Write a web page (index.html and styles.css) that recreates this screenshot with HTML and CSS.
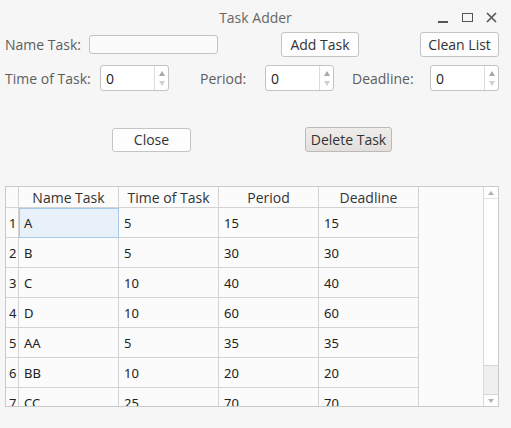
FILE: index.html
```html
<!DOCTYPE html>
<html>
<head>
<meta charset="utf-8">
<link rel="stylesheet" href="styles.css">
</head>
<body>
<div class="window">
  <div class="titlebar">
    <div class="title">Task Adder</div>
    <div class="controls">
      <span class="ctl min"></span>
      <span class="ctl max"></span>
      <svg class="ctl close" width="11" height="11" viewBox="0 0 11 11"><path d="M1 1L10 10M10 1L1 10" stroke="#555" stroke-width="1.6" fill="none"/></svg>
    </div>
  </div>

  <div class="row row1">
    <label class="lbl lbl-name">Name Task:</label>
    <input class="text-input" type="text">
    <button class="btn btn-add">Add Task</button>
    <button class="btn btn-clean">Clean List</button>
  </div>

  <div class="row row2">
    <label class="lbl lbl-time">Time of Task:</label>
    <div class="spin"><span class="val">0</span><span class="arrows"><span class="up"></span><span class="down"></span></span></div>
    <label class="lbl lbl-period">Period:</label>
    <div class="spin"><span class="val">0</span><span class="arrows"><span class="up"></span><span class="down"></span></span></div>
    <label class="lbl lbl-deadline">Deadline:</label>
    <div class="spin"><span class="val">0</span><span class="arrows"><span class="up"></span><span class="down"></span></span></div>
  </div>

  <div class="row row3">
    <button class="btn btn-close">Close</button>
    <button class="btn btn-delete">Delete Task</button>
  </div>

  <div class="grid">
    <div class="grid-body">
      <table class="tbl">
        <thead>
          <tr><th class="rn"></th><th>Name Task</th><th>Time of Task</th><th>Period</th><th>Deadline</th></tr>
        </thead>
        <tbody>
          <tr><td class="rn">1</td><td class="sel">A</td><td>5</td><td>15</td><td>15</td></tr>
          <tr><td class="rn">2</td><td>B</td><td>5</td><td>30</td><td>30</td></tr>
          <tr><td class="rn">3</td><td>C</td><td>10</td><td>40</td><td>40</td></tr>
          <tr><td class="rn">4</td><td>D</td><td>10</td><td>60</td><td>60</td></tr>
          <tr><td class="rn">5</td><td>AA</td><td>5</td><td>35</td><td>35</td></tr>
          <tr><td class="rn">6</td><td>BB</td><td>10</td><td>20</td><td>20</td></tr>
          <tr><td class="rn">7</td><td>CC</td><td>25</td><td>70</td><td>70</td></tr>
        </tbody>
      </table>
    </div>
    <div class="scrollbar">
      <span class="sb-up"></span>
      <div class="sb-track"><div class="sb-thumb"></div></div>
      <span class="sb-down"></span>
    </div>
  </div>
</div>
</body>
</html>
```

FILE: styles.css
```css
html, body {
  margin: 0;
  padding: 0;
  background: #f6f6f6;
}
body {
  width: 511px;
  height: 428px;
  overflow: hidden;
  font-family: "Open Sans", "Noto Sans", sans-serif;
  font-size: 14px;
  color: #333;
}
.window {
  display: flex;
  flex-direction: column;
}
.titlebar {
  height: 32px;
  display: flex;
  align-items: center;
  justify-content: center;
  position: relative;
}
.title {
  font-size: 14px;
  color: #666;
  margin-top: 2px;
}
.controls {
  position: absolute;
  right: 14px;
  top: 12px;
  display: flex;
  align-items: center;
  gap: 14px;
}
.ctl { display: block; }
.min {
  width: 10px;
  height: 2px;
  background: #555;
  margin-top: 8px;
}
.max {
  box-sizing: border-box;
  border: 1.5px solid #555;
  width: 11px;
  height: 9px;
  margin-right: -1px;
}
.row {
  display: flex;
  align-items: center;
  padding-left: 5px;
}
.lbl {
  color: #5d5d5d;
  font-size: 14px;
  flex: none;
}
.lbl-name { width: 84px; }
.lbl-time { width: 95px; }
.lbl-period { margin-left: 31px; width: 65px; }
.lbl-deadline { margin-left: 18px; width: 78px; }
.row1 {
  height: 25px;
}
.text-input {
  width: 129px;
  height: 19px;
  box-sizing: border-box;
  border: 1px solid #c3c3c3;
  border-radius: 3px;
  background: #fbfbfb;
  padding: 0;
}
.btn {
  font-family: "Open Sans", "Noto Sans", sans-serif;
  font-size: 14px;
  color: #333;
  height: 25px;
  box-sizing: border-box;
  border: 1px solid #c4c4c4;
  border-radius: 3px;
  background: #fdfdfd;
  padding: 0;
}
.btn-add { margin-left: 63px; width: 78px; }
.btn-clean { margin-left: 61px; width: 79px; }
.row2 {
  margin-top: 8px;
  height: 26px;
}
.spin {
  width: 69px;
  height: 26px;
  box-sizing: border-box;
  border: 1px solid #c3c3c3;
  border-radius: 3px;
  background: #fff;
  display: flex;
  align-items: stretch;
  flex: none;
}
.val {
  flex: 1;
  display: flex;
  align-items: center;
  padding-left: 5px;
  color: #222;
  font-size: 14px;
}
.arrows {
  width: 13px;
  border-left: 1px solid #dcdcdc;
  display: flex;
  flex-direction: column;
  align-items: center;
  justify-content: center;
  gap: 5px;
}
.up {
  width: 0; height: 0;
  border-left: 3.5px solid transparent;
  border-right: 3.5px solid transparent;
  border-bottom: 5px solid #a8a8a8;
}
.down {
  width: 0; height: 0;
  border-left: 3.5px solid transparent;
  border-right: 3.5px solid transparent;
  border-top: 5px solid #d0d0d0;
}
.row3 {
  margin-top: 36px;
  height: 25px;
  padding-left: 112px;
}
.btn-close { width: 79px; height: 24px; }
.btn-delete {
  margin-left: 114px;
  width: 87px;
  background: linear-gradient(#efedea, #e2e0dc);
  border-color: #bcbab6;
}
.grid {
  margin: 34px 0 0 5px;
  width: 494px;
  height: 221px;
  box-sizing: border-box;
  border: 1px solid #c9c9c9;
  background: #fbfbfb;
  display: flex;
}
.grid-body {
  flex: 1;
  overflow: hidden;
}
.tbl {
  border-collapse: collapse;
  table-layout: fixed;
  font-family: "Noto Sans", "DejaVu Sans", sans-serif;
  font-size: 13px;
  color: #222;
}
.tbl th {
  font-family: "Open Sans", "Noto Sans", sans-serif;
  font-weight: normal;
  font-size: 14px;
  color: #333;
  height: 20px;
  padding: 0;
  border-right: 1px solid #d3d3d3;
  border-bottom: 1px solid #d3d3d3;
  width: 99px;
  text-align: center;
  line-height: 19px;
}
.tbl td {
  height: 30px;
  padding: 0 0 0 5px;
  border-right: 1px solid #d3d3d3;
  border-bottom: 1px solid #d3d3d3;
  width: 94px;
  box-sizing: border-box;
  white-space: nowrap;
}
.tbl th.rn { width: 12px; }
.tbl td.rn {
  width: 12px;
  padding: 0 0 0 3px;
  font-size: 13px;
}
.tbl td.sel {
  background: #e8f0f9;
  outline: 1px solid #a9c9e9;
  outline-offset: -1px;
}
.scrollbar {
  width: 14px;
  border-left: 1px solid #dadada;
  background: #fefefe;
  display: flex;
  flex-direction: column;
  align-items: stretch;
}
.sb-up, .sb-down {
  height: 11px;
  display: flex;
  justify-content: center;
  align-items: center;
}
.sb-up::before {
  content: "";
  border-left: 3.5px solid transparent;
  border-right: 3.5px solid transparent;
  border-bottom: 4px solid #b0b0b0;
}
.sb-down::before {
  content: "";
  border-left: 3.5px solid transparent;
  border-right: 3.5px solid transparent;
  border-top: 4px solid #b0b0b0;
}
.sb-up { border-bottom: 1px solid #e4e4e4; }
.sb-track {
  flex: 1;
  display: flex;
  flex-direction: column;
  justify-content: flex-end;
}
.sb-thumb {
  height: 28px;
  background: #efefef;
  border-top: 1px solid #d6d6d6;
  border-bottom: 1px solid #d6d6d6;
}
```
